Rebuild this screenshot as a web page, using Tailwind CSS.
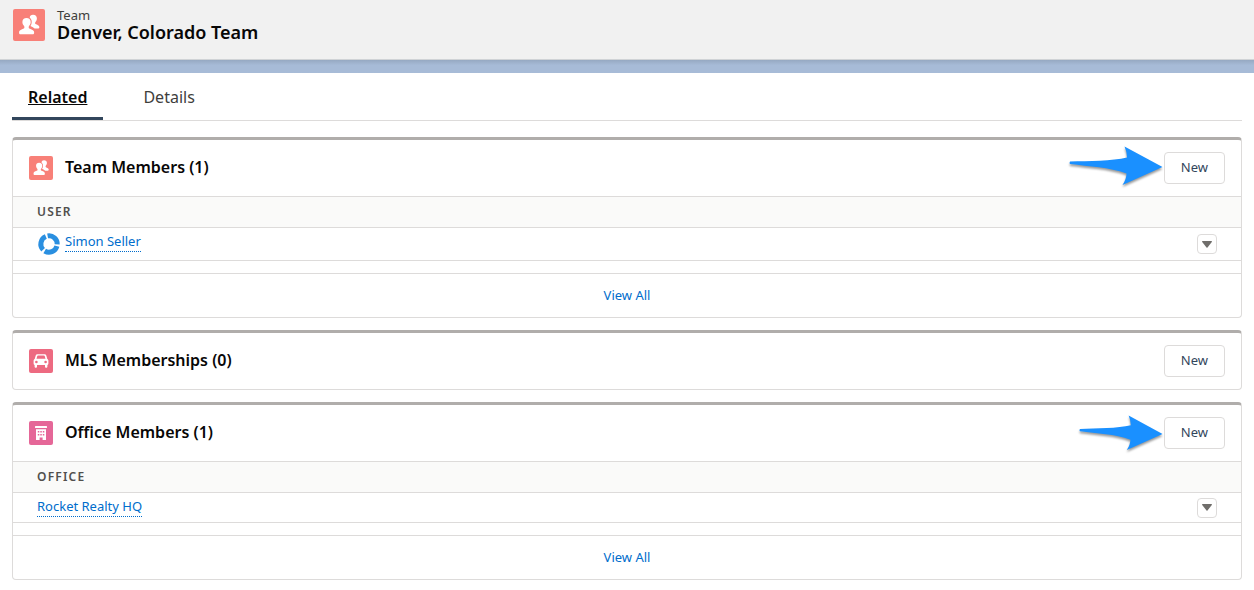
<!DOCTYPE html>
<html lang="en">
  <head>
    <meta charset="UTF-8" />
    <meta name="viewport" content="width=device-width, initial-scale=1.0" />
    <title>Denver, Colorado Team</title>
    <script src="https://cdn.jsdelivr.net/npm/@tailwindcss/browser@4"></script>
  </head>
  <body class="bg-white font-['Noto_Sans','Open_Sans',sans-serif] text-[13px] leading-5 text-[#080707]">
    <svg class="hidden">
      <symbol id="team" viewBox="0 0 32 32">
        <path fill="#fff" d="M20 5.800c-1.900 0-3.100 1.100-3.300 2.700 1.300 1.100 2 2.600 2 4.400 0 1.500-.5 3-1.300 4.200 1.900.8 3.300 1.600 4.200 2.500h3.400c.7 0 1.300-.5 1.300-1.200v-.5c0-1.200-1.500-2-3.200-2.700-.8-.4-1-.7-1-1.300s.3-1 .7-1.500c.7-.8 1.100-1.800 1.100-3 0-2.100-1.400-3.600-3.900-3.600z" />
        <path fill="#fff" d="M13.500 9c-2.500 0-4.100 1.600-4.100 4 0 1.400.5 2.600 1.300 3.500.5.500.7 1 .7 1.700s-.3 1.200-1.200 1.500c-2.400.9-4.100 1.800-4.100 3.300v.9c0 .8.600 1.400 1.400 1.400h12.200c.8 0 1.400-.6 1.400-1.400V23c0-1.500-1.800-2.400-4.200-3.300-.9-.3-1.200-.8-1.200-1.500s.2-1.200.7-1.700c.8-.9 1.300-2.100 1.300-3.500 0-2.400-1.700-4-4.200-4z" />
      </symbol>
      <symbol id="arrow" viewBox="0 0 94 40" preserveAspectRatio="none">
        <path fill="#1a90ff" d="M1 15.500C20 15 43 15 58 11.500Q58 6 55.500.5L93.500 21 53.500 39Q57.500 33 57.500 27.500C40 21 20 20.500 1 18Q0 17 1 15.500Z" />
      </symbol>
    </svg>

    <header class="flex gap-3 h-[60px] px-[13px] pt-[7px] bg-[#f1f1f1] border-b border-[#d0d3d6]">
      <span class="size-8 mt-0.5 shrink-0 rounded-xs bg-[#f88078]">
        <svg class="size-8"><use href="#team" /></svg>
      </span>
      <div>
        <p class="leading-4 text-[#3e3e3c]">Team</p>
        <h1 class="text-lg leading-[18px] font-semibold">Denver, Colorado Team</h1>
      </div>
    </header>
    <div class="h-[13px] bg-linear-to-b from-[#96a9c2] to-[#a7bbd7] to-40%"></div>

    <main class="px-3 pb-2">
      <nav class="flex h-12 mb-4 border-b border-[#dddbda] text-base text-[#3e3e3c]">
        <a href="#related" class="flex items-center px-4 pt-1 border-b-3 border-[#32465c] font-semibold text-[#080707] underline">Related</a>
        <a href="#details" class="flex items-center px-4 pt-1 ml-6 border-b-3 border-transparent">Details</a>
      </nav>

      <div id="related" class="flex flex-col gap-3">
        <!-- Team members -->
        <section class="rounded border border-t-3 border-[#dddbda] border-t-[#b0adab]">
          <div class="flex items-center h-14 px-4">
            <span class="size-6 mr-3 rounded-xs bg-[#f88078]">
              <svg class="size-6"><use href="#team" /></svg>
            </span>
            <h2 class="pb-0.5 text-base font-semibold">Team Members (1)</h2>
            <div class="relative ml-auto">
              <svg class="absolute right-full -top-1.5 mr-px w-[94px] h-10 drop-shadow-[0_2px_1px_rgb(0_0_0/0.4)]"><use href="#arrow" /></svg>
              <button type="button" class="h-8 px-4 pb-0.5 rounded border border-[#dddbda] bg-white text-[#32465c]">New</button>
            </div>
          </div>
          <table class="w-full border-separate border-spacing-0">
            <thead>
              <tr class="bg-[#fafaf9]">
                <th colspan="2" class="h-8 px-6 py-0 border-y border-[#dddbda] text-left text-xs font-semibold tracking-widest text-[#514f4d]">USER</th>
              </tr>
            </thead>
            <tbody>
              <tr>
                <td class="h-[33px] pl-6 border-b border-[#dddbda]">
                  <div class="flex items-center gap-1">
                    <svg class="size-6" viewBox="0 0 24 24" fill="none" stroke="#2a8fe0" stroke-width="5">
                      <path d="M10.600 3.900A8.200 8.200 0 0 1 20.200 12.400M19.900 14.100A8.200 8.200 0 0 1 7.700 19M6.100 17.700A8.200 8.200 0 0 1 8.800 4.500" />
                    </svg>
                    <a href="#" class="mb-1 pb-0.5 leading-4 border-b border-dotted border-[#006dcc] text-[#006dcc]">Simon Seller</a>
                  </div>
                </td>
                <td class="pr-6 border-b border-[#dddbda]">
                  <button type="button" aria-label="Show actions" class="flex items-center justify-center size-5 ml-auto rounded border border-[#dddbda]">
                    <svg class="w-[10px] h-[7px]" viewBox="0 0 10 7"><path fill="#706e6b" d="M.5 0h9q.7.200.3.900L5.500 6.500q-.5.500-1 0L.2.900Q-.2.200.5 0z" /></svg>
                  </button>
                </td>
              </tr>
            </tbody>
          </table>
          <a href="#" class="block mt-3 border-t border-[#dddbda] pt-[11px] h-11 text-center text-[#006dcc]">View All</a>
        </section>

        <!-- MLS memberships -->
        <section class="rounded border border-t-3 border-[#dddbda] border-t-[#b0adab]">
          <div class="flex items-center h-14 px-4">
            <span class="size-6 mr-3 rounded-xs bg-[#ed6a81]">
              <svg class="size-6" viewBox="0 0 24 24">
                <path fill="#fff" fill-rule="evenodd" d="M8.700 5.200h6.600c1 0 1.700.5 2 1.400l1 3.300c.7.300 1.100 1 1.100 1.800v2.900c0 .7-.4 1.200-1 1.400v1.400c0 .8-.5 1.300-1.200 1.300s-1.200-.5-1.200-1.300V16H8v1.400c0 .8-.5 1.300-1.200 1.300s-1.200-.5-1.200-1.300V16c-.6-.2-1-.7-1-1.400v-2.900c0-.8.4-1.500 1.100-1.800l1-3.300c.3-.9 1-1.400 2-1.400zM8.300 7l-.8 2.700h9L15.700 7q-.1-.4-.6-.4H8.900q-.5 0-.6.400zM7.400 11.700a1.300 1.300 0 1 0 0 2.600 1.300 1.300 0 0 0 0-2.600zm9.200 0a1.300 1.300 0 1 0 0 2.600 1.300 1.300 0 0 0 0-2.600z" />
              </svg>
            </span>
            <h2 class="pb-0.5 text-base font-semibold">MLS Memberships (0)</h2>
            <button type="button" class="ml-auto h-8 px-4 pb-0.5 rounded border border-[#dddbda] bg-white text-[#32465c]">New</button>
          </div>
        </section>

        <!-- Office members -->
        <section class="rounded border border-t-3 border-[#dddbda] border-t-[#b0adab]">
          <div class="flex items-center h-14 px-4">
            <span class="size-6 mr-3 rounded-xs bg-[#e56798]">
              <svg class="size-6" viewBox="0 0 24 24">
                <path fill="#fff" fill-rule="evenodd" d="M6.600 5h10.800q.6 0 .6.600v.8q0 .6-.6.600H6.600Q6 7 6 6.400v-.8Q6 5 6.600 5zM7 8.300h10V19h-3.400v-2.600h-3V19H7zM8.800 9.900v1.500h1.500V9.900zm2.500 0v1.500h1.500V9.900zm2.500 0v1.500h1.500V9.900zM8.800 13v1.500h1.500V13zm2.500 0v1.500h1.500V13zm2.500 0v1.500h1.500V13z" />
              </svg>
            </span>
            <h2 class="pb-0.5 text-base font-semibold">Office Members (1)</h2>
            <div class="relative ml-auto">
              <svg class="absolute right-full -top-0.5 mr-px w-[84px] h-9 drop-shadow-[0_2px_1px_rgb(0_0_0/0.4)]"><use href="#arrow" /></svg>
              <button type="button" class="h-8 px-4 pb-0.5 rounded border border-[#dddbda] bg-white text-[#32465c]">New</button>
            </div>
          </div>
          <table class="w-full border-separate border-spacing-0">
            <thead>
              <tr class="bg-[#fafaf9]">
                <th colspan="2" class="h-8 px-6 py-0 border-y border-[#dddbda] text-left text-xs font-semibold tracking-widest text-[#514f4d]">OFFICE</th>
              </tr>
            </thead>
            <tbody>
              <tr>
                <td class="h-[30px] pl-6 border-b border-[#dddbda]">
                  <div class="flex">
                    <a href="#" class="pb-0.5 leading-4 border-b border-dotted border-[#006dcc] text-[#006dcc]">Rocket Realty HQ</a>
                  </div>
                </td>
                <td class="pr-6 border-b border-[#dddbda]">
                  <button type="button" aria-label="Show actions" class="flex items-center justify-center size-5 ml-auto rounded border border-[#dddbda]">
                    <svg class="w-[10px] h-[7px]" viewBox="0 0 10 7"><path fill="#706e6b" d="M.5 0h9q.7.200.3.900L5.500 6.500q-.5.500-1 0L.2.900Q-.2.200.5 0z" /></svg>
                  </button>
                </td>
              </tr>
            </tbody>
          </table>
          <a href="#" class="block mt-3 border-t border-[#dddbda] pt-[11px] h-11 text-center text-[#006dcc]">View All</a>
        </section>
      </div>
    </main>
  </body>
</html>
